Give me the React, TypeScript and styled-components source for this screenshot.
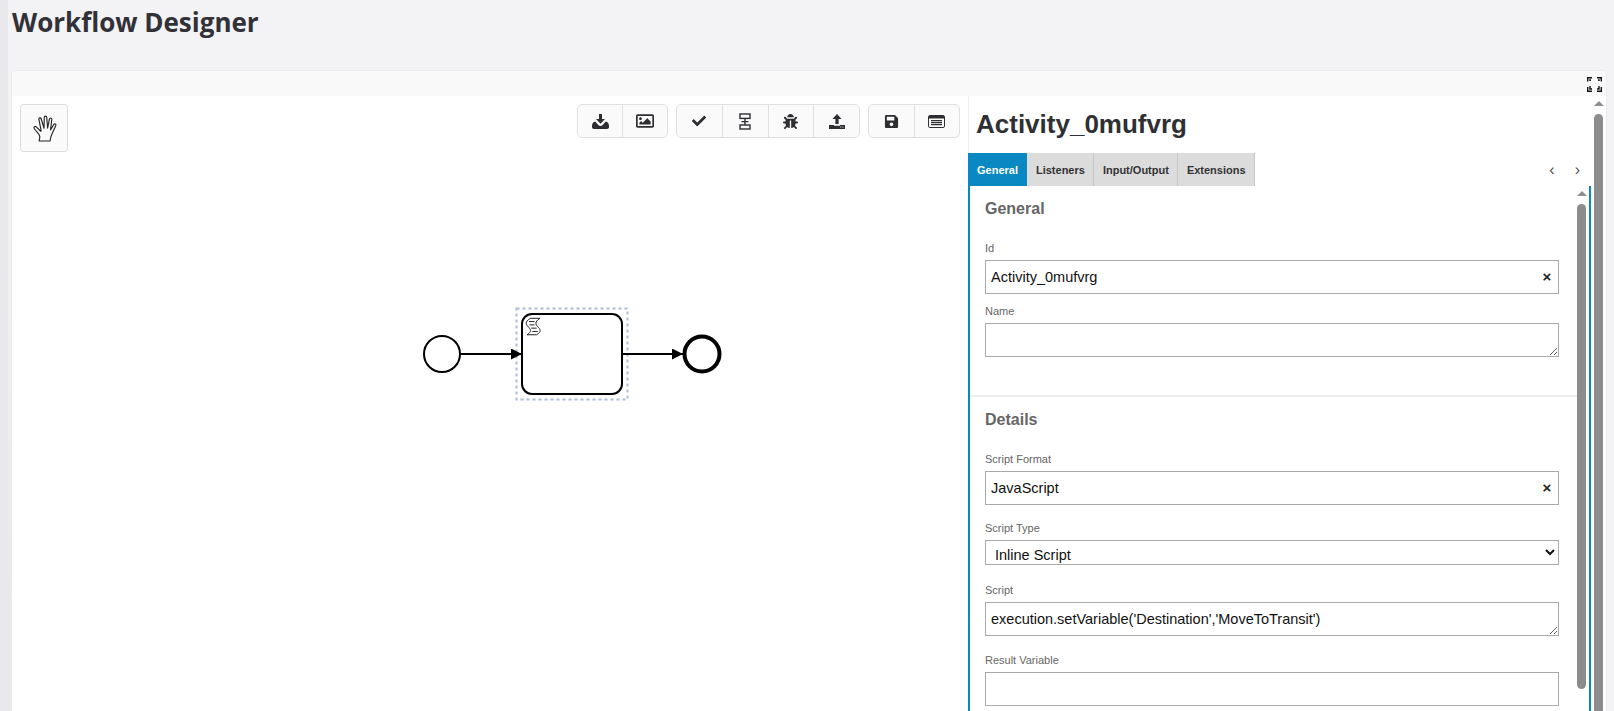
import React from "react";
import styled, { createGlobalStyle } from "styled-components";
import { FaBug, FaCheck, FaRegImage, FaSave } from "react-icons/fa";

const Global = createGlobalStyle`
  html, body { margin: 0; padding: 0; height: 100%; overflow: hidden; background: #f3f2f5; }
  * { box-sizing: border-box; }
`;

const Page = styled.div`
  display: flex;
  height: 100vh;
  overflow: hidden;
  font-family: "Liberation Sans", Arial, sans-serif;
`;
const SideStrip = styled.div`
  width: 12px;
  flex: none;
  background:
    linear-gradient(to right, #e9e8ec 8px, transparent 8px),
    linear-gradient(to bottom, #f3f2f5 25%, #e9e8ec 85%);
`;
const Content = styled.main`
  flex: 1;
  min-width: 0;
  display: flex;
  flex-direction: column;
  padding: 0 8px 0 0;
`;
const PageTitle = styled.h1`
  margin: 0;
  height: 71px;
  flex: none;
  padding-top: 5px;
  font: 700 26px/35px "Open Sans", sans-serif;
  color: #323137;
`;
const Card = styled.section`
  flex: 1;
  min-height: 0;
  display: flex;
  flex-direction: column;
  background: #fff;
  border-radius: 4px 4px 0 0;
  box-shadow: 0 0 0 1px #ebebee;
  overflow: hidden;
`;
const CardHeader = styled.header`
  height: 25px;
  flex: none;
  display: flex;
  justify-content: flex-end;
  align-items: center;
  padding-right: 4px;
  background: #f9f9f9;
`;
const FullscreenButton = styled.span`
  display: flex;
  color: #111;
  margin-top: 1px;
`;
const CardBody = styled.div`
  flex: 1;
  min-height: 0;
  display: flex;
`;
const Canvas = styled.div`
  position: relative;
  width: 956px;
  flex: none;
  display: flex;
  justify-content: space-between;
  align-items: flex-start;
  padding: 8px;
`;
const Diagram = styled.svg`
  position: absolute;
  left: 0;
  top: 0;
`;
const HandButton = styled.button`
  position: relative;
  width: 48px;
  height: 48px;
  padding: 0;
  display: flex;
  align-items: center;
  justify-content: center;
  background: #fafafa;
  border: 1px solid #ddd;
  border-radius: 3px;
  color: #222;
`;
const Toolbars = styled.div`
  position: relative;
  display: flex;
  gap: 8px;
`;
const ToolGroup = styled.div<{ $width: number }>`
  display: flex;
  width: ${(p) => p.$width}px;
  height: 34px;
  border: 1px solid #e0e0e0;
  border-radius: 5px;
  background: #fafafa;
  overflow: hidden;
`;
const ToolButton = styled.button`
  flex: 1;
  padding: 0;
  display: flex;
  align-items: center;
  justify-content: center;
  background: transparent;
  border: 0;
  color: #2d2d32;
  & + & { border-left: 1px solid #e0e0e0; }
`;
const Panel = styled.aside`
  width: 626px;
  flex: none;
  display: flex;
  flex-direction: column;
  padding-right: 3px;
  min-height: 0;
`;
const PanelTitle = styled.h2`
  margin: 0;
  height: 57px;
  flex: none;
  padding: 10px 0 0 7px;
  font: 700 26px/36px "Liberation Sans", sans-serif;
  color: #2f3033;
  border-left: 1px solid #eee;
`;
const TabBar = styled.nav`
  height: 33px;
  flex: none;
  display: flex;
  align-items: stretch;
`;
const Tab = styled.div<{ $active?: boolean }>`
  display: flex;
  align-items: center;
  padding: 0 8px 0 9px;
  font-size: 11px;
  font-weight: 700;
  color: ${(p) => (p.$active ? "#fff" : "#333")};
  background: ${(p) => (p.$active ? "#0a88c2" : "#dcdcdc")};
  border-right: 1px solid ${(p) => (p.$active ? "#0a88c2" : "#c8c8c8")};
`;
const TabNav = styled.div`
  margin-left: auto;
  display: flex;
  align-items: center;
  gap: 20px;
  padding: 0 11px 0 0;
  font-size: 16px;
  color: #555;
`;
const TabBody = styled.div`
  flex: 1;
  min-height: 0;
  display: flex;
  border-left: 2px solid #0a88c2;
  border-right: 2px solid #0a88c2;
  overflow: hidden;
`;
const Form = styled.div`
  flex: 1;
  min-width: 0;
`;
const Group = styled.div<{ $divided?: boolean }>`
  padding: 14px 18px 0 15px;
  border-top: ${(p) => (p.$divided ? "2px solid #eee" : "0")};
  margin-top: ${(p) => (p.$divided ? "38px" : "0")};
`;
const GroupTitle = styled.h3`
  margin: 0 0 23px;
  font: 700 16px/18px "Liberation Sans", sans-serif;
  color: #666;
`;
const Field = styled.div<{ $gap: number }>`
  position: relative;
  margin-bottom: ${(p) => p.$gap}px;
`;
const Label = styled.label`
  display: block;
  margin-bottom: 5px;
  font-size: 11px;
  line-height: 14px;
  color: #666;
`;
const TextInput = styled.input`
  display: block;
  width: 100%;
  height: 34px;
  padding: 0 5px;
  font: 14.5px "Liberation Sans", sans-serif;
  color: #111;
  background: #fff;
  border: 1px solid #aaa;
  border-radius: 0;
  outline: 0;
`;
const TextArea = styled.textarea`
  display: block;
  width: 100%;
  height: 34px;
  min-height: 34px;
  padding: 8px 5px 0;
  resize: vertical;
  overflow: hidden;
  font: 14.5px/16px "Liberation Sans", sans-serif;
  color: #111;
  background: #fff;
  border: 1px solid #aaa;
  border-radius: 0;
  outline: 0;
`;
const Select = styled.select`
  display: block;
  width: 100%;
  height: 25px;
  padding: 5px 0 0 5px;
  font: 14.5px "Liberation Sans", sans-serif;
  color: #111;
  background: #fff;
  border: 1px solid #aaa;
  border-radius: 0;
  outline: 0;
`;
const Clear = styled.span`
  position: absolute;
  right: 7px;
  bottom: 8px;
  width: 10px;
  font-size: 15px;
  line-height: 18px;
  font-weight: 700;
  text-align: center;
  color: #222;
`;
const ScrollTrack = styled.div<{ $inset?: number }>`
  width: 9px;
  flex: none;
  display: flex;
  flex-direction: column;
  align-items: center;
  padding-top: 5px;
  margin-right: ${(p) => p.$inset ?? 0}px;
`;
const ScrollArrow = styled.span`
  width: 0;
  height: 0;
  flex: none;
  border-left: 5px solid transparent;
  border-right: 5px solid transparent;
  border-bottom: 5px solid #8e8e8e;
`;
const ScrollThumb = styled.span<{ $height?: number }>`
  display: block;
  width: 9px;
  margin-top: 8px;
  background: #8c8c8c;
  border-radius: 5px 5px ${(p) => (p.$height ? "5px 5px" : "0 0")};
  height: ${(p) => (p.$height ? `${p.$height}px` : "auto")};
  flex: ${(p) => (p.$height ? "none" : "1")};
`;

const Icon = styled.svg`
  display: block;
`;

const DownloadIcon = () => (
  <Icon width="17" height="15" viewBox="0 0 17 15" fill="currentColor">
    <path d="M7 0h3v5h3l-4.5 4.8L4 5h3z" />
    <path d="M3.2 7.6l3.4 3.6c1 1 2.8 1 3.8 0l3.4-3.6c1.6.2 3.2 2 3.2 4.2V13c0 1.2-.8 2-2 2H2c-1.2 0-2-.8-2-2v-1.2c0-2.2 1.6-4 3.2-4.2z" />
  </Icon>
);
const UploadIcon = () => (
  <Icon width="16" height="15" viewBox="0 0 16 15" fill="currentColor">
    <path d="M8 0l4.6 5H9.6v5H6.4V5H3.4z" />
    <path fillRule="evenodd" d="M0 11h5v.8h6V11h5v4H0zM11.2 12.6v1h1v-1zM13.4 12.6v1h1v-1z" />
  </Icon>
);
const FlowIcon = () => (
  <Icon width="14" height="17" viewBox="0 0 14 17" fill="none" stroke="currentColor" strokeWidth="1.4">
    <rect x="2" y="1" width="10" height="4.4" />
    <rect x="2" y="12" width="10" height="4" />
    <path d="M7 5.4V12M3.5 8.6h7" />
  </Icon>
);
const ConsoleIcon = () => (
  <Icon width="17" height="13" viewBox="0 0 17 13">
    <rect x="0.5" y="0.5" width="16" height="12" rx="1.4" fill="#fff" stroke="currentColor" />
    <path d="M1 1h15v2.6H1z" fill="currentColor" />
    <path d="M3 5.6h11M3 7.6h11M3 9.6h11" stroke="currentColor" strokeWidth="1.1" />
  </Icon>
);
const HandIcon = () => (
  <Icon width="31" height="31" viewBox="0 0 26 26" fill="none" stroke="currentColor" strokeWidth="0.95" strokeLinejoin="round" strokeLinecap="round">
    <path d="M8.5 23.5h9.2l.5-3c.2-1 .6-1.8 1-2.7l3.3-7.3c.5-1.2-1.1-2-1.8-.9l-2.5 4.5-.1-.3 1-8.4c.2-1.4-1.7-1.7-2-.3l-1.5 7.7-.7-9c-.1-1.5-2-1.5-2.1 0l-.2 9-2.4-8c-.4-1.3-2.2-.8-1.9.6L10.2 15l-.4.3-3.7-3.7c-1.1-1-2.6.4-1.6 1.6l3.6 4.6c.6.8.8 1.3 1 2.2z" />
  </Icon>
);
const FullscreenIcon = () => (
  <Icon width="15" height="15" viewBox="0 0 15 15" fill="none" stroke="currentColor" strokeWidth="1.4">
    <path d="M.7 4.5V.7h4.3M3 4V3h1M10 .7h4.3v3.8M12 4V3h-1M.7 10v4.3H5M3 9v3h2M14.3 10v4.3H10M12 9v3h-2" />
  </Icon>
);

const BpmnDiagram = () => (
  <Diagram width="956" height="615" viewBox="12 96 956 615">
    <defs>
      <marker id="head" viewBox="0 0 10 10" refX="10" refY="5" markerWidth="11" markerHeight="11" orient="auto" markerUnits="userSpaceOnUse">
        <path d="M0 0L10 5L0 10z" fill="#000" />
      </marker>
    </defs>
    <rect x="516.5" y="308.5" width="111" height="91" fill="none" stroke="#a9bcdb" strokeWidth="2" strokeDasharray="3 3" />
    <circle cx="442" cy="354" r="18" fill="#fff" stroke="#000" strokeWidth="2" />
    <path d="M460 354H522" stroke="#000" strokeWidth="2" markerEnd="url(#head)" fill="none" />
    <rect x="522" y="314" width="100" height="80" rx="10" fill="#fff" stroke="#000" strokeWidth="2" />
    <g transform="translate(536.7 334.75) scale(1.1)" fill="#fff" stroke="#222" strokeWidth="0.9">
      <path d="m0 0c9.966553-6.27276-8.000926-7.91932 2.968968-14.938l-8.802728 0c-10.969894 7.01868 6.997585 8.66524-2.968967 14.938z" />
      <path d="m-7-12l5 0m-4.5 3l4.5 0m-3 3l5 0m-4 3l5 0" fill="none" />
    </g>
    <path d="M622 354H683" stroke="#000" strokeWidth="2" markerEnd="url(#head)" fill="none" />
    <circle cx="702" cy="354" r="17.5" fill="#fff" stroke="#000" strokeWidth="4" />
  </Diagram>
);

export default function App() {
  return (
    <Page>
      <Global />
      <SideStrip />
      <Content>
        <PageTitle>Workflow Designer</PageTitle>
        <Card>
          <CardHeader>
            <FullscreenButton>
              <FullscreenIcon />
            </FullscreenButton>
          </CardHeader>
          <CardBody>
            <Canvas>
              <BpmnDiagram />
              <HandButton>
                <HandIcon />
              </HandButton>
              <Toolbars>
                <ToolGroup $width={91}>
                  <ToolButton><DownloadIcon /></ToolButton>
                  <ToolButton><FaRegImage size={18} /></ToolButton>
                </ToolGroup>
                <ToolGroup $width={184}>
                  <ToolButton><FaCheck size={14} /></ToolButton>
                  <ToolButton><FlowIcon /></ToolButton>
                  <ToolButton><FaBug size={15} /></ToolButton>
                  <ToolButton><UploadIcon /></ToolButton>
                </ToolGroup>
                <ToolGroup $width={92}>
                  <ToolButton><FaSave size={15} /></ToolButton>
                  <ToolButton><ConsoleIcon /></ToolButton>
                </ToolGroup>
              </Toolbars>
            </Canvas>
            <Panel>
              <PanelTitle>Activity_0mufvrg</PanelTitle>
              <TabBar>
                <Tab $active>General</Tab>
                <Tab>Listeners</Tab>
                <Tab>Input/Output</Tab>
                <Tab>Extensions</Tab>
                <TabNav>
                  <span>‹</span>
                  <span>›</span>
                </TabNav>
              </TabBar>
              <TabBody>
                <Form>
                  <Group>
                    <GroupTitle>General</GroupTitle>
                    <Field $gap={10}>
                      <Label>Id</Label>
                      <TextInput readOnly value="Activity_0mufvrg" />
                      <Clear>×</Clear>
                    </Field>
                    <Field $gap={0}>
                      <Label>Name</Label>
                      <TextArea readOnly value="" />
                    </Field>
                  </Group>
                  <Group $divided>
                    <GroupTitle>Details</GroupTitle>
                    <Field $gap={16}>
                      <Label>Script Format</Label>
                      <TextInput readOnly value="JavaScript" />
                      <Clear>×</Clear>
                    </Field>
                    <Field $gap={18}>
                      <Label>Script Type</Label>
                      <Select defaultValue="inline">
                        <option value="inline">Inline Script</option>
                      </Select>
                    </Field>
                    <Field $gap={17}>
                      <Label>Script</Label>
                      <TextArea readOnly value="execution.setVariable('Destination','MoveToTransit')" />
                    </Field>
                    <Field $gap={0}>
                      <Label>Result Variable</Label>
                      <TextInput readOnly value="" />
                    </Field>
                  </Group>
                </Form>
                <ScrollTrack $inset={3}>
                  <ScrollArrow />
                  <ScrollThumb $height={485} />
                </ScrollTrack>
              </TabBody>
            </Panel>
            <ScrollTrack $inset={3}>
              <ScrollArrow />
              <ScrollThumb />
            </ScrollTrack>
          </CardBody>
        </Card>
      </Content>
    </Page>
  );
}
